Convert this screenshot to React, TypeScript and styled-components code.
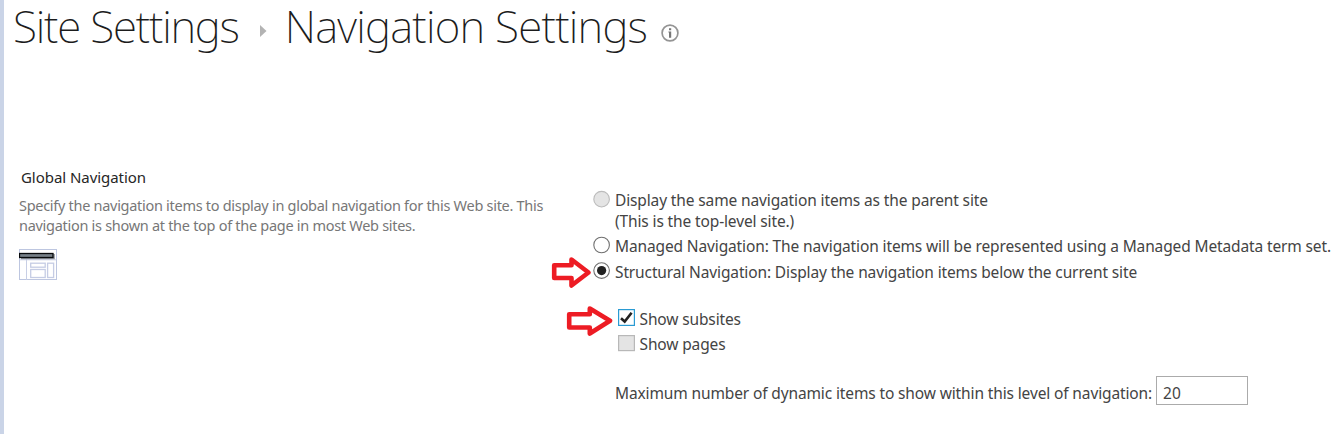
import React from 'react';
import styled, { createGlobalStyle } from 'styled-components';

const GlobalStyle = createGlobalStyle`
  * { box-sizing: border-box; }
  body { margin: 0; background: #fff; }
`;

const Page = styled.div`
  position: relative;
  height: 434px;
  border-left: 4px solid #cad4e7;
  font-family: "Noto Sans", "Segoe UI", sans-serif;
  color: #444;
  white-space: nowrap;
`;

const Header = styled.header`
  display: flex;
  align-items: center;
  height: 53px;
  padding-left: 9px;
`;

const Title = styled.h1<{ $spacing: number }>`
  margin: 0;
  font-size: 44px;
  font-weight: 200;
  line-height: 53px;
  color: #1c1c1c;
  letter-spacing: ${(p) => p.$spacing}px;
`;

const Separator = styled.svg`
  width: 7px;
  height: 12px;
  margin: 9px 18px 0 21px;
`;

const InfoIcon = styled.svg`
  width: 20px;
  height: 20px;
  margin: 12px 0 0 13px;
`;

const Columns = styled.main`
  display: grid;
  grid-template-columns: 588px 1fr;
  padding-top: 114px;
`;

const Description = styled.section`
  padding-left: 15px;
`;

const SectionTitle = styled.h2`
  margin: 0 0 8px 2px;
  font-size: 15px;
  font-weight: 400;
  line-height: 20px;
  letter-spacing: -0.05px;
  color: #262626;
`;

const HelpText = styled.p`
  margin: 0;
  font-size: 14.5px;
  line-height: 20px;
  letter-spacing: -0.29px;
  color: #777;
`;

const LayoutIcon = styled.svg`
  display: block;
  width: 39px;
  height: 32px;
  margin-top: 14px;
`;

const Options = styled.section`
  padding-top: 23px;
  font-size: 15.5px;
  line-height: 20px;
  letter-spacing: -0.13px;
`;

const OptionRow = styled.label<{ $gap?: number; $indent?: number }>`
  display: flex;
  height: 20px;
  margin-top: ${(p) => p.$gap ?? 0}px;
  padding-left: ${(p) => p.$indent ?? 0}px;
`;

const Radio = styled.svg`
  width: 20px;
  height: 20px;
  margin-right: 3px;
  flex: none;
`;

const Check = styled.svg`
  width: 18px;
  height: 20px;
  margin-right: 3.5px;
  flex: none;
`;

const NumberInput = styled.input`
  width: 92px;
  height: 29px;
  margin: -7px 0 0 4px;
  padding: 4px 6px 0;
  border: 1px solid #ababab;
  outline: none;
  color: #444;
  font: 400 15.5px "Noto Sans", sans-serif;
`;

const Callout = styled.svg<{ $x: number; $y: number }>`
  position: absolute;
  left: ${(p) => p.$x - 4}px;
  top: ${(p) => p.$y}px;
  width: 48px;
  height: 34px;
  fill: none;
  stroke: #ed1c24;
  stroke-width: 4.6;
  stroke-linejoin: round;
`;

type RadioProps = { cy: number; state: 'off' | 'on' | 'disabled' };

function RadioMark({ cy, state }: RadioProps) {
  const disabled = state === 'disabled';
  return (
    <Radio viewBox="0 0 20 20">
      <circle cx="9.6" cy={cy} r="7.8" fill={disabled ? '#e4e4e4' : '#fff'} stroke={disabled ? '#bcbcbc' : '#707070'} strokeWidth="1.1" />
      {state === 'on' && <circle cx="9.6" cy={cy} r="4.6" fill="#222" />}
    </Radio>
  );
}

export default function App() {
  return (
    <>
      <GlobalStyle />
      <Page>
        <Header>
          <Title $spacing={-1.22}>Site Settings</Title>
          <Separator viewBox="0 0 7 12"><path d="M0 0L6.5 6L0 12Z" fill="#b3b3b3" /></Separator>
          <Title $spacing={-0.77}>Navigation Settings</Title>
          <InfoIcon viewBox="0 0 20 20">
            <circle cx="10" cy="10" r="7.9" fill="none" stroke="#949494" strokeWidth="1.7" />
            <path d="M9 5.2h2.2v2H9zM8.4 8.5h2.8v6.3H9V9.6h-.6z" fill="#777" />
          </InfoIcon>
        </Header>
        <Columns>
          <Description>
            <SectionTitle>Global Navigation</SectionTitle>
            <HelpText>
              Specify the navigation items to display in global navigation for this Web site. This
              <br />
              navigation is shown at the top of the page in most Web sites.
            </HelpText>
            <LayoutIcon viewBox="0 0 39 32">
              <rect x=".5" y=".5" width="37" height="30" fill="#fff" stroke="#bdc6e0" />
              <path d="M1 10.8h36M7.5 10v21" stroke="#c8cfe5" />
              <path d="M2 9.5h33V5" fill="none" stroke="#8e939b" strokeWidth="1.6" />
              <rect x=".5" y="4.5" width="33.5" height="4" fill="#778088" stroke="#080a0c" strokeWidth="1.3" />
              <g fill="#fff" stroke="#c5cce4" strokeWidth="1.3">
                <rect x="11.7" y="14.2" width="14.5" height="4" />
                <rect x="11.7" y="20.5" width="14.5" height="8" />
                <rect x="28.6" y="14.2" width="6" height="14.3" />
              </g>
            </LayoutIcon>
          </Description>
          <Options>
            <OptionRow>
              <RadioMark cy={9.2} state="disabled" />
              Display the same navigation items as the parent site
            </OptionRow>
            <OptionRow $gap={1} $indent={23}>(This is the top-level site.)</OptionRow>
            <OptionRow $gap={5}>
              <RadioMark cy={9} state="off" />
              Managed Navigation: The navigation items will be represented using a Managed Metadata term set.
            </OptionRow>
            <OptionRow $gap={6}>
              <RadioMark cy={8.6} state="on" />
              Structural Navigation: Display the navigation items below the current site
            </OptionRow>
            <OptionRow $gap={27} $indent={26}>
              <Check viewBox="0 0 18 20">
                <rect x=".6" y=".6" width="15.8" height="15.8" fill="#fff" stroke="#2a9bd3" strokeWidth="1.2" />
                <path d="M3 9.2l3.7 3.3L13.6 3.8" fill="none" stroke="#222" strokeWidth="2.6" />
              </Check>
              Show subsites
            </OptionRow>
            <OptionRow $gap={5} $indent={26}>
              <Check viewBox="0 0 18 20">
                <rect x=".6" y="1.6" width="15.8" height="15" fill="#e4e4e4" stroke="#b8b8b8" strokeWidth="1.2" />
              </Check>
              Show pages
            </OptionRow>
            <OptionRow $gap={29} $indent={23}>
              Maximum number of dynamic items to show within this level of navigation:
              <NumberInput defaultValue="20" />
            </OptionRow>
          </Options>
        </Columns>
        <Callout $x={550} $y={255} viewBox="0 0 48 34">
          <path d="M4.2 10.2H21.5V4.5L38.5 17.5L21.5 30.5V23H4.2Z" />
        </Callout>
        <Callout $x={565} $y={304} viewBox="0 0 48 34">
          <path d="M4.2 10.2H24.8V4.5L45 16.7L24.8 29.5V23.5H4.2Z" />
        </Callout>
      </Page>
    </>
  );
}
